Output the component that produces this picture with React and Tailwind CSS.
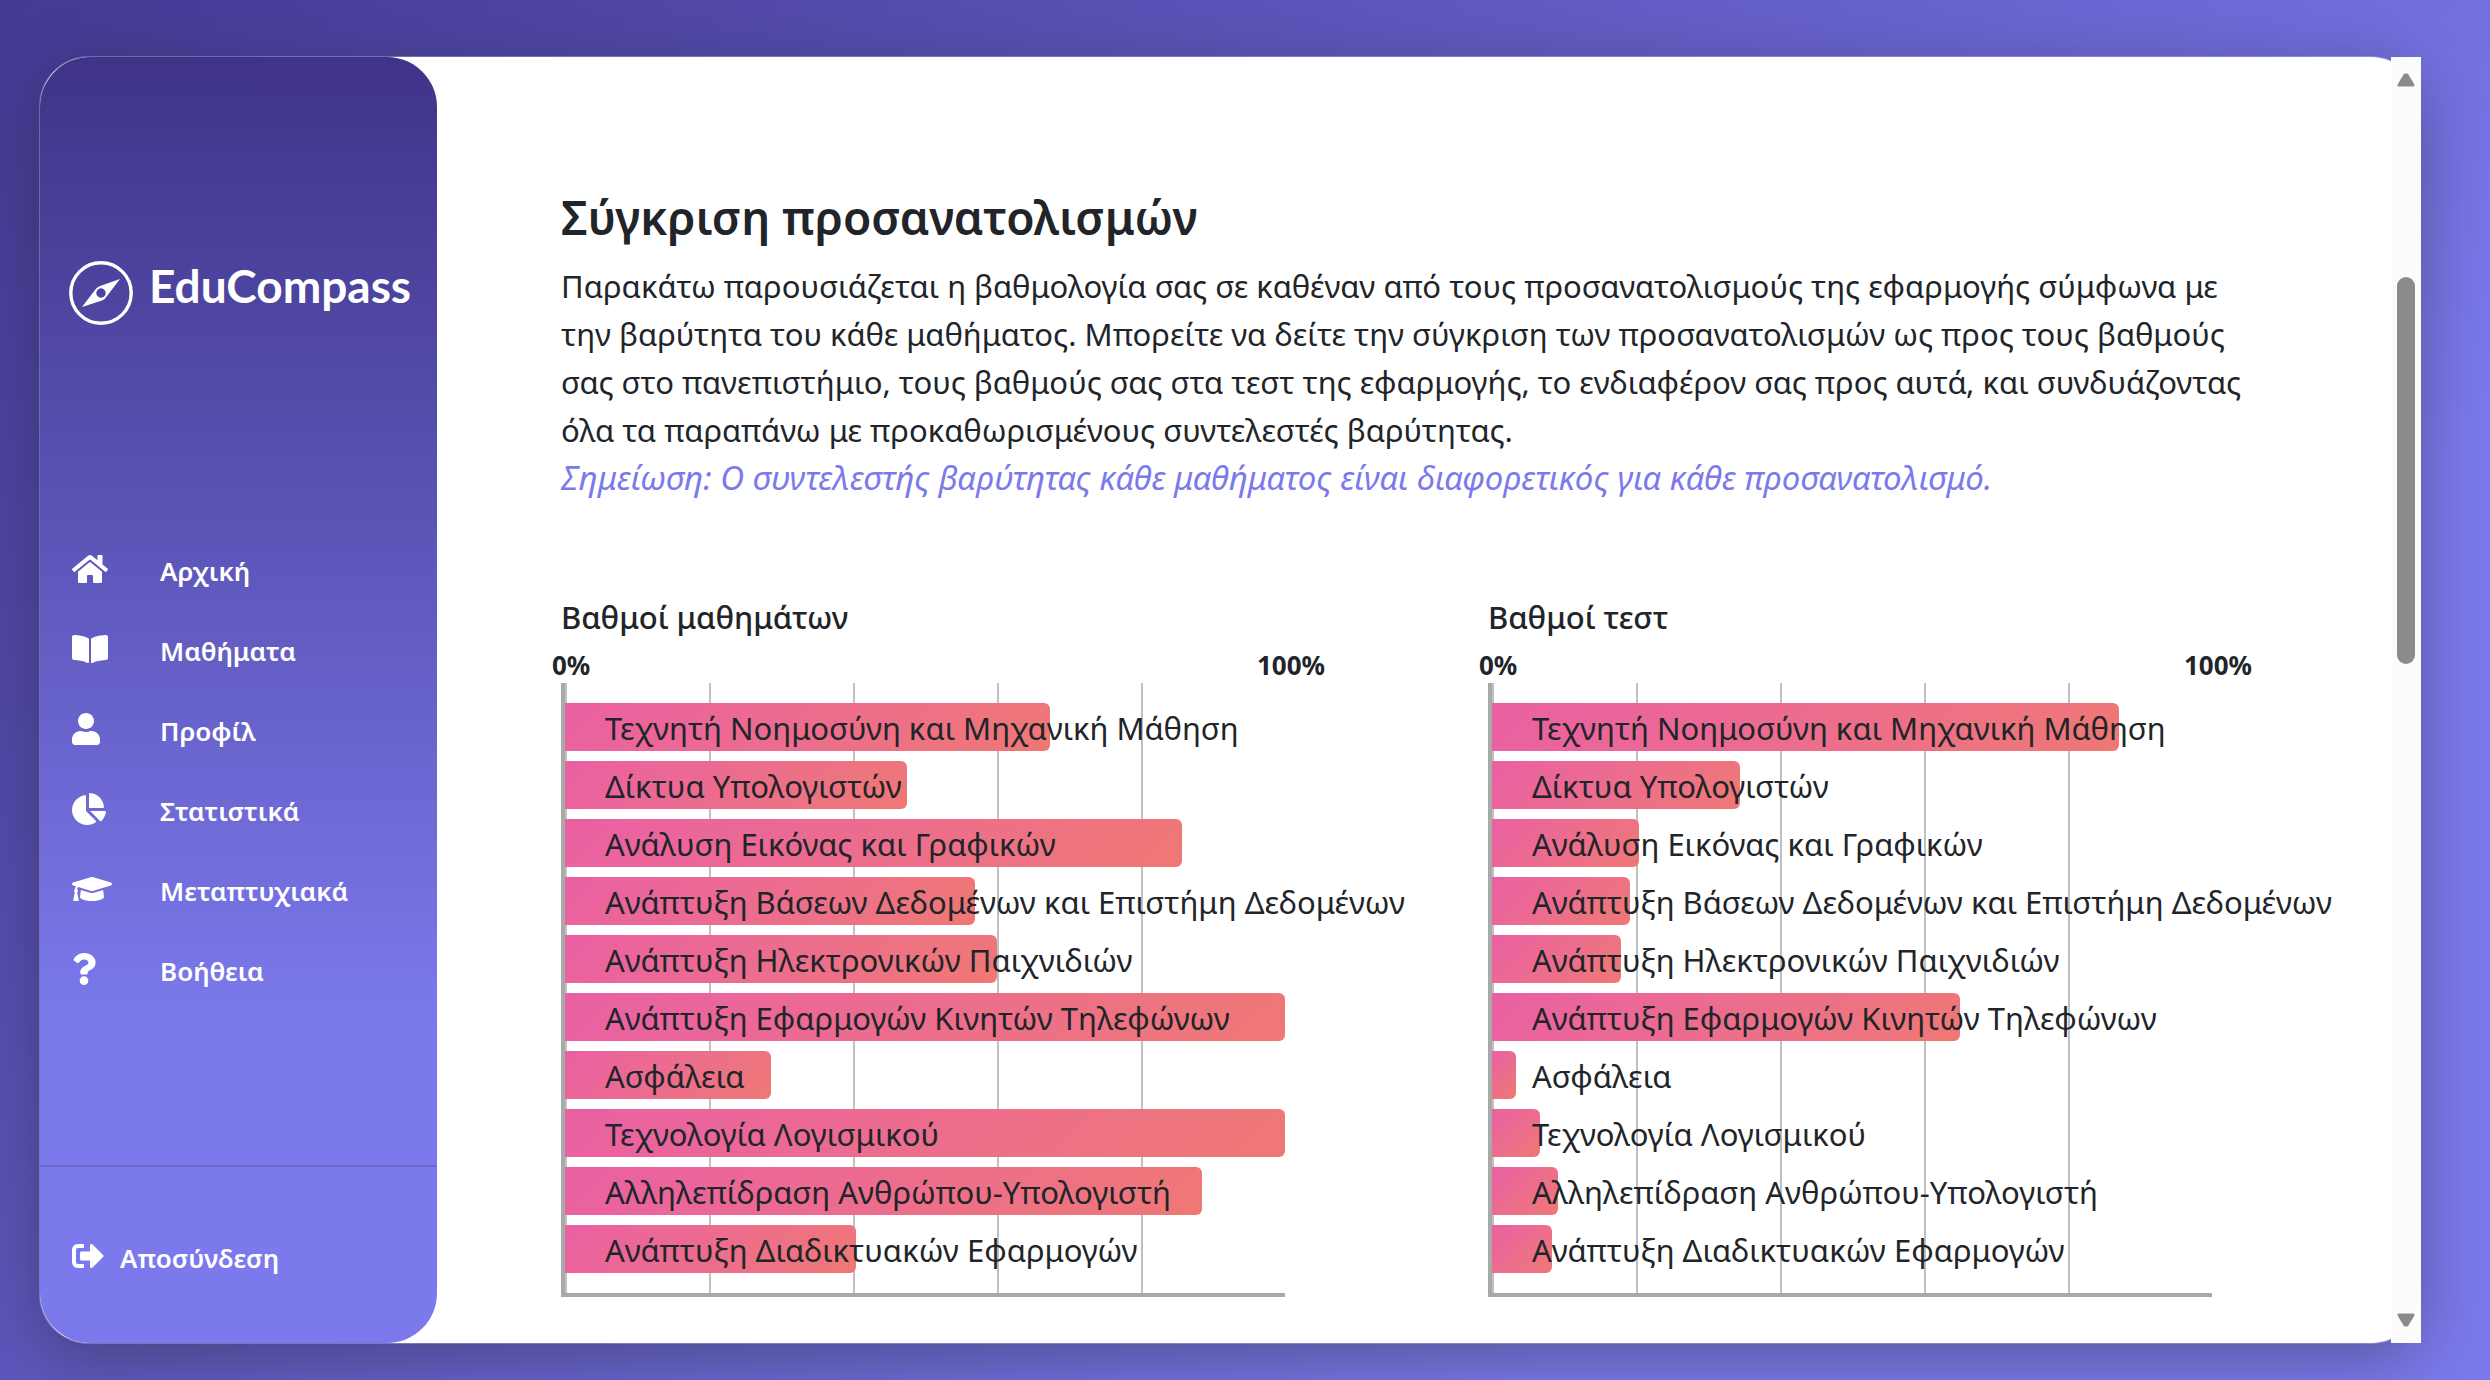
import React from "react";
import {
  FaHome,
  FaBookOpen,
  FaUser,
  FaChartPie,
  FaGraduationCap,
  FaQuestion,
  FaSignOutAlt,
} from "react-icons/fa";

const NAV = [
  { label: "Αρχική", Icon: FaHome, width: "w-9" },
  { label: "Μαθήματα", Icon: FaBookOpen, width: "w-9" },
  { label: "Προφίλ", Icon: FaUser, width: "w-7" },
  { label: "Στατιστικά", Icon: FaChartPie, width: "w-[34px]" },
  { label: "Μεταπτυχιακά", Icon: FaGraduationCap, width: "w-10" },
  { label: "Βοήθεια", Icon: FaQuestion, width: "w-6" },
];

const FIELDS = [
  "Τεχνητή Νοημοσύνη και Μηχανική Μάθηση",
  "Δίκτυα Υπολογιστών",
  "Ανάλυση Εικόνας και Γραφικών",
  "Ανάπτυξη Βάσεων Δεδομένων και Επιστήμη Δεδομένων",
  "Ανάπτυξη Ηλεκτρονικών Παιχνιδιών",
  "Ανάπτυξη Εφαρμογών Κινητών Τηλεφώνων",
  "Ασφάλεια",
  "Τεχνολογία Λογισμικού",
  "Αλληλεπίδραση Ανθρώπου-Υπολογιστή",
  "Ανάπτυξη Διαδικτυακών Εφαρμογών",
];

const CHARTS = [
  { title: "Βαθμοί μαθημάτων", values: [67.4, 47.5, 85.7, 57, 60, 100, 28.6, 100, 88.5, 40.4] },
  { title: "Βαθμοί τεστ", values: [87.1, 34.4, 20.4, 19.2, 17.9, 65, 3.4, 6.7, 9.2, 8.3] },
];

function Logo() {
  return (
    <div className="flex items-start gap-4 pl-[29px] text-white">
      <svg viewBox="0 0 64 64" className="h-16 w-16 shrink-0" aria-hidden="true">
        <circle cx="32" cy="32" r="30.2" fill="none" stroke="currentColor" strokeWidth="3.4" />
        <path
          fill="currentColor"
          fillRule="evenodd"
          d="M51 18 L38 35 Q36.500 38 33 39.500 L13 46 L26 29 Q27.500 26.500 31 25 Z M32 27.300 a4.700 4.700 0 1 0 0.010 0 Z"
        />
      </svg>
      <span className="font-[Lato,sans-serif] text-[46px] leading-[50px] font-bold">EduCompass</span>
    </div>
  );
}

function Sidebar() {
  return (
    <aside className="flex w-[397px] shrink-0 flex-col rounded-[50px] bg-linear-to-b from-[#3f3488] to-[#7c79ec] to-75% text-[26px] font-semibold text-white">
      <div className="pt-[204px]">
        <Logo />
      </div>
      <nav className="mt-[206px]">
        <ul>
          {NAV.map(({ label, Icon, width }) => (
            <li key={label}>
              <a href="#" className="flex h-20 items-center pl-8">
                <span className="w-[88px]">
                  <Icon className={`mb-1 h-8 ${width}`} aria-hidden="true" />
                </span>
                {label}
              </a>
            </li>
          ))}
        </ul>
      </nav>
      <div className="mt-auto border-t-2 border-[#6a66c4] pt-[68px] pb-[62px]">
        <button type="button" className="flex items-center gap-4 pl-8 leading-[46px]">
          <FaSignOutAlt className="mb-1 h-8 w-8" aria-hidden="true" />
          Αποσύνδεση
        </button>
      </div>
    </aside>
  );
}

function BarChart({ title, values }) {
  return (
    <section>
      <h2 className="text-[31px] leading-[38px] font-medium">{title}</h2>
      <div className="-mr-10 -ml-[9px] mt-3 flex justify-between text-[26px] leading-[35px] font-bold">
        <span>0%</span>
        <span>100%</span>
      </div>
      <div className="border-b-4 border-l-4 border-[#a9a9a9]">
        <ul className="flex flex-col gap-[10px] bg-[linear-gradient(to_right,#c0c0c0_2px,transparent_2px)] bg-[size:20%_100%] py-5">
          {values.map((value, i) => (
            <li key={FIELDS[i]} className="grid grid-rows-[48px]">
              <div
                className="col-start-1 row-start-1 rounded-r-md bg-linear-135 from-[#ea60a3] to-[#ef7874]"
                style={{ width: `${value}%` }}
              />
              <span className="col-start-1 row-start-1 h-12 w-0 pl-10 text-[31px] leading-[50px] whitespace-nowrap">
                {FIELDS[i]}
              </span>
            </li>
          ))}
        </ul>
      </div>
    </section>
  );
}

function Scrollbar() {
  return (
    <div className="-mr-px flex w-[30px] shrink-0 flex-col items-center bg-[#fcfcfc] text-[#8b8b8b]" aria-hidden="true">
      <svg viewBox="0 0 18 14" className="mt-4 h-[14px] w-[18px]">
        <path d="M2 12 L8 2 H10 L16 12 Z" fill="currentColor" stroke="currentColor" strokeWidth="3" strokeLinejoin="round" />
      </svg>
      <div className="mt-[190px] h-[387px] w-[18px] rounded-full bg-[#8b8b8b]" />
      <svg viewBox="0 0 18 14" className="mt-auto mb-4 h-[14px] w-[18px]">
        <path d="M2 2 H16 L10 12 H8 Z" fill="currentColor" stroke="currentColor" strokeWidth="3" strokeLinejoin="round" />
      </svg>
    </div>
  );
}

export default function App() {
  return (
    <div className="flex min-h-screen bg-linear-135 from-[#443993] to-[#7c79ec] to-75% pt-14 pr-[69px] pb-9 pl-[39px] font-['Noto_Sans',sans-serif] text-[#212529]">
      <div className="flex flex-1 rounded-[50px] border border-white/25 bg-white bg-clip-padding shadow-[0_16px_64px_rgba(31,38,40,0.4)]">
        <Sidebar />
        <main className="min-w-0 flex-1 pt-[131px] pr-[123px] pl-[124px]">
          <h1 className="text-[46px] leading-[58px] font-semibold">Σύγκριση προσανατολισμών</h1>
          <p className="mt-4 text-[31px] leading-12">
            Παρακάτω παρουσιάζεται η βαθμολογία σας σε καθέναν από τους προσανατολισμούς της εφαρμογής σύμφωνα με την
            βαρύτητα του κάθε μαθήματος. Μπορείτε να δείτε την σύγκριση των προσανατολισμών ως προς τους βαθμούς σας στο
            πανεπιστήμιο, τους βαθμούς σας στα τεστ της εφαρμογής, το ενδιαφέρον σας προς αυτά, και συνδυάζοντας όλα τα
            παραπάνω με προκαθωρισμένους συντελεστές βαρύτητας.
            <br />
            <em className="text-[33px] text-[#7c79ec]">
              Σημείωση: Ο συντελεστής βαρύτητας κάθε μαθήματος είναι διαφορετικός για κάθε προσανατολισμό.
            </em>
          </p>
          <div className="mt-24 grid grid-cols-2 gap-[203px] pr-14">
            {CHARTS.map((chart) => (
              <BarChart key={chart.title} title={chart.title} values={chart.values} />
            ))}
          </div>
        </main>
        <Scrollbar />
      </div>
    </div>
  );
}
